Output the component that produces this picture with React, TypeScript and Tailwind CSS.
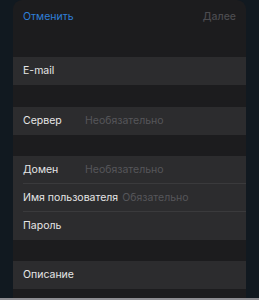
export default function App() {
  const font = { fontFamily: "Inter, 'Noto Sans', sans-serif" };
  return (
    <div
      className="h-[300px] w-[259px] bg-[#111920] flex flex-col overflow-hidden"
      style={font}
    >
      <div className="mx-[13px] flex-1 flex flex-col bg-[#1c1c1e] rounded-t-[9px]">
        {/* Nav */}
        <div className="h-[57px] flex items-start justify-between px-[10px] pt-[10px]">
          <span className="text-[10.5px] leading-[14px] text-[#2f7fd8]">Отменить</span>
          <span className="text-[10.5px] leading-[14px] text-[#4b4b4f] font-medium">Далее</span>
        </div>

        <Row label="E-mail" />
        <div className="h-[22px]" />
        <Row label="Сервер" placeholder="Необязательно" />
        <div className="h-[21px]" />
        <div className="flex flex-col bg-[#2c2c2e]">
          <Row label="Домен" placeholder="Необязательно" divider />
          <Row label="Имя пользователя" placeholder="Обязательно" divider inline />
          <Row label="Пароль" />
        </div>
        <div className="h-[21px]" />
        <Row label="Описание" />
        <div className="flex-1" />
      </div>
      <div className="h-[2px] bg-[#8e8e93]" />
    </div>
  );
}

function Row({
  label,
  placeholder,
  divider,
  inline,
}: {
  label: string;
  placeholder?: string;
  divider?: boolean;
  inline?: boolean;
}) {
  return (
    <div className="bg-[#2c2c2e] pl-[10px]">
      <div
        className={
          "h-[28px] flex items-center text-[10.5px] " +
          (divider ? "border-b border-[#3a3a3c]" : "")
        }
      >
        <span className={inline ? "text-[#e6e6e6] mr-[4px]" : "text-[#e6e6e6] w-[62px] shrink-0"}>
          {label}
        </span>
        {placeholder && <span className="text-[#56565a]">{placeholder}</span>}
      </div>
    </div>
  );
}
